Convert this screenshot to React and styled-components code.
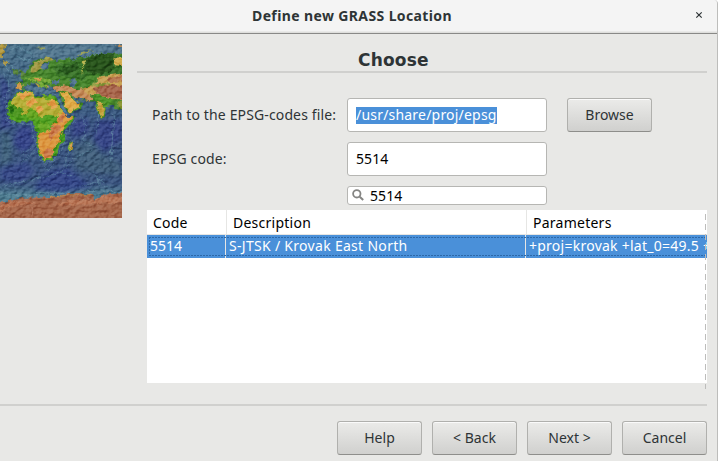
import React from 'react';
import styled, { createGlobalStyle } from 'styled-components';

const GlobalStyle = createGlobalStyle`
  * { box-sizing: border-box; }
  body { margin: 0; background: #fff; overflow: hidden; }
`;

const Dialog = styled.div`
  width: 718px;
  height: 461px;
  display: flex;
  flex-direction: column;
  overflow: hidden;
  background: #e8e8e6;
  border-right: 1px solid #bdbdbb;
  border-top-right-radius: 4px;
  font: 14px/20px "Noto Sans", sans-serif;
  color: #2e3436;
  white-space: nowrap;
`;

const TitleBar = styled.header`
  flex: none;
  height: 34px;
  display: flex;
  align-items: center;
  padding: 0 14px 2px 252px;
  justify-content: space-between;
  background: linear-gradient(#f4f4f4 31px, #dededc 32px);
  border-bottom: 1px solid #898987;
`;

const Text = styled.span`
  display: block;
  letter-spacing: ${(p) => p.$track || 0}px;
  font-weight: ${(p) => (p.$bold ? 700 : 400)};
`;

const CloseIcon = styled.svg`
  width: 8px;
  height: 8px;
  display: block;
  position: relative;
  top: -1px;
`;

const Main = styled.main`
  flex: none;
  height: 370px;
  display: flex;
  gap: 15px;
  padding-top: 10px;
`;

const MapPicture = styled.svg`
  flex: none;
  width: 122px;
  height: 174px;
  display: block;
`;

const Relief = styled.rect`
  mix-blend-mode: soft-light;
`;

const Page = styled.section`
  width: 570px;
  display: flex;
  flex-direction: column;
`;

const Heading = styled.h1`
  margin: 0;
  padding-left: 221px;
  height: 29px;
  font: bold 17px/32px "DejaVu Sans", sans-serif;
  letter-spacing: 0.2px;
  border-bottom: 2px solid #d0d0ce;
`;

const Form = styled.div`
  display: grid;
  grid-template-columns: 195px 200px 85px;
  grid-template-rows: 34px 34px 19px;
  row-gap: 10px;
  align-items: center;
  padding: 25px 0 0 15px;
`;

const Field = styled.div`
  grid-column: 2;
  height: ${(p) => (p.$compact ? 19 : 34)}px;
  display: flex;
  align-items: center;
  gap: 6px;
  padding: 0 ${(p) => (p.$compact ? 4 : 8)}px;
  background: #fff;
  border: 1px solid #b6b6b3;
  border-radius: 3px;
  color: #000;
`;

const Selection = styled.span`
  width: 141px;
  height: 17px;
  line-height: 16px;
  overflow: hidden;
  background: #4a90d9;
  color: #fff;
  letter-spacing: 0.2px;
`;

const SearchIcon = styled.svg`
  width: 12px;
  height: 12px;
  flex: none;
  margin-top: -2px;
`;

const Button = styled.button`
  width: 85px;
  height: 34px;
  padding: 0;
  display: flex;
  align-items: center;
  justify-content: center;
  font: inherit;
  color: inherit;
  background: linear-gradient(#ebebe9, #d0d0ce);
  border: 1px solid #b0b0ad;
  border-bottom-color: #8e8e8b;
  border-radius: 3px;
  box-shadow: inset 0 1px #fafafa;
  margin-left: ${(p) => p.$indent || 0}px;
`;

const Table = styled.div`
  position: relative;
  width: 560px;
  height: 173px;
  margin: 5px 0 0 10px;
  background: #fff;
  color: #000;
`;

const TableRow = styled.div`
  display: grid;
  grid-template-columns: ${(p) => (p.$selected ? '79px 300px 181px' : '80px 300px 180px')};
  height: ${(p) => (p.$selected ? 23 : 25)}px;
  position: relative;
  background: ${(p) => (p.$selected ? '#4a90d9' : '#fff')};
  color: ${(p) => (p.$selected ? '#fff' : '#000')};
  ${(p) => !p.$selected && 'border-bottom: 1px solid #e6e6e4;'}
`;

const Cell = styled.div`
  padding: ${(p) => (p.$head ? '2px 0 0 6px' : '0 0 2px 3px')};
  overflow: hidden;
  display: flex;
  align-items: center;
  border-right: ${(p) => (p.$last ? 0 : 1)}px solid #e6e6e4;
`;

const FocusLine = styled.div`
  position: absolute;
  inset: 2px 0 2px 2px;
  background:
    repeating-linear-gradient(90deg, #2c68a8 0 2px, transparent 2px 3px) top / 100% 1px no-repeat,
    repeating-linear-gradient(90deg, #2c68a8 0 2px, transparent 2px 3px) bottom / 100% 1px no-repeat,
    repeating-linear-gradient(#2c68a8 0 2px, transparent 2px 3px) left / 1px 100% no-repeat;
`;

const TableEdge = styled.div`
  position: absolute;
  right: 1px;
  top: 4px;
  width: 1px;
  height: 175px;
  background: repeating-linear-gradient(#bdbdbb 0 6px, transparent 6px 10px);
`;

const Footer = styled.footer`
  display: flex;
  justify-content: flex-end;
  gap: 10px;
  width: 707px;
  border-top: 2px solid #d0d0ce;
  padding-top: 15px;
`;

function WorldMap() {
  return (
    <MapPicture viewBox="0 42 366 522" preserveAspectRatio="none">
      <defs>
        <linearGradient id="ocean" x1="0" y1="0" x2="0" y2="1">
          <stop offset="0" stopColor="#4b7189" />
          <stop offset=".3" stopColor="#3d5f82" />
          <stop offset=".5" stopColor="#3a5580" />
          <stop offset=".8" stopColor="#3a547f" />
          <stop offset=".87" stopColor="#4d7b8f" />
        </linearGradient>
        <filter id="rough" x="-5%" y="-5%" width="110%" height="110%" colorInterpolationFilters="sRGB">
          <feTurbulence type="fractalNoise" baseFrequency=".08" numOctaves="3" seed="8" result="n" />
          <feDisplacementMap in="SourceGraphic" in2="n" scale="16" xChannelSelector="R" yChannelSelector="G" />
        </filter>
        <filter id="soft" x="-20%" y="-20%" width="140%" height="140%">
          <feGaussianBlur stdDeviation="8" />
        </filter>
        <filter id="relief" x="0" y="0" width="100%" height="100%" colorInterpolationFilters="sRGB">
          <feTurbulence type="fractalNoise" baseFrequency=".06 .09" numOctaves="5" seed="21" result="h" />
          <feColorMatrix in="h" values="0 0 0 0 0  0 0 0 0 0  0 0 0 0 0  1 0 0 0 0" result="a" />
          <feDiffuseLighting in="a" surfaceScale="9" lightingColor="#b4b4b4">
            <feDistantLight azimuth="225" elevation="50" />
          </feDiffuseLighting>
        </filter>
        <clipPath id="frame"><rect y="42" width="366" height="522" /></clipPath>
      </defs>
      <g clipPath="url(#frame)">
        <rect y="42" width="366" height="522" fill="url(#ocean)" />
        <g filter="url(#soft)" opacity=".75">
          <path d="M0 130L30 170 20 240 45 285 0 300Z" fill="#363f88" />
          <path d="M60 285L100 290 105 345 70 370 35 340Z" fill="#34408c" />
          <path d="M215 270L265 265 265 310 215 325Z" fill="#353f88" />
          <path d="M290 270L366 270 366 330 310 365 280 330Z" fill="#363f88" />
          <path d="M130 430L200 410 275 470 190 490 100 480Z" fill="#32438a" />
          <path d="M0 415L80 395 105 425 60 460 0 450Z" fill="#364489" />
          <path d="M10 300L38 330 35 390 0 410V310Z" fill="#43667c" />
          <path d="M215 350L270 325 300 370 366 400V440L290 430 230 420Z" fill="#42627a" />
          <path d="M90 55L230 45 366 50 340 75 220 90 165 90 100 82Z" fill="#567a92" />
        </g>
        <g fill="none" stroke="#6392a6" strokeWidth="2.5" filter="url(#rough)" opacity=".6">
          <path d="M10 130L25 150 27 175 15 205 18 250 25 275 60 284 95 282 101 325 114 365 122 392 142 400 173 381 193 342 199 306 225 271" />
          <path d="M18 90L40 115 55 125 M30 62L55 50 90 70 M50 80L85 92 100 80 M15 105L35 135" strokeWidth="4" />
          <path d="M245 260Q270 290 248 330L280 350 M210 325L220 345 200 380 195 410" />
          <path d="M287 225Q300 270 287 310 M342 250L333 390" strokeWidth="3" />
          <path d="M12 468Q90 450 140 440T205 405T278 360 M55 382L105 342 M65 400L102 365" />
          <path d="M130 410L150 420 165 397 M184 429L217 438 M247 470L310 450 M275 426L322 471 M291 435L300 465" />
          <path d="M0 492L85 497 120 489 240 490 280 482 366 486" strokeWidth="4" />
        </g>
        <g filter="url(#rough)">
          <path d="M80 122L105 90 150 80 168 94 205 84 230 94 265 76 325 70 376 72V235L352 240 337 224 319 228 315 254 306 271 294 248 286 215 267 214 249 211 222 202 205 184 169 181 158 169 126 173 112 159 89 161 77 178 51 178 48 158 69 158 65 141Z" fill="#47862d" />
          <path d="M88 125Q100 90 150 80L163 91 132 93 125 112 99 129Z" fill="#a29a45" />
          <path d="M160 110L243 82 325 68 376 80V132L307 139 269 133 248 151 215 145 175 139Z" fill="#397329" />
          <path d="M253 88L288 73 342 72 339 121 302 134 258 125Z" fill="#27531b" />
          <path d="M172 121L231 98 239 118 200 132Z" fill="#28591e" />
          <path d="M249 89L262 88 250 114 244 137Z" fill="#b5b34a" />
          <path d="M340 82L376 83V109L344 106Z" fill="#d4ae4e" />
          <path d="M70 148L105 140 150 147 157 158 125 154 143 174 126 171 103 153Z" fill="#74a938" />
          <path d="M104 145L122 143 122 150 106 152Z M48 163L67 162 70 174 54 180 47 173Z" fill="#d39a4c" />
          <path d="M157 170L178 164 208 169 228 179 264 177 275 186 272 215 247 208 225 203 203 183 175 184 159 180Z" fill="#c58b58" />
          <path d="M243 176L275 167 302 139 376 129V207L330 208 299 196 267 194Z" fill="#c8a052" />
          <path d="M281 174L330 163 376 170V206L330 204 293 193Z" fill="#a8664c" />
          <path d="M320 148L376 132V153L329 157Z" fill="#b67750" />
          <path d="M262 168L290 158 330 160 300 172Z" fill="#8a9a3c" />
          <path d="M276 197L300 194 320 208 336 206 335 221 318 228 314 251 307 267 296 250 288 215Z" fill="#4e9529" />
          <path d="M294 214L311 224 315 243 305 263 296 246Z" fill="#c7a33e" />
          <path d="M351 215L376 210V242L354 233Z" fill="#87932f" />
          <path d="M39 117L55 119 56 133 40 135Z M58 116L66 119 79 137 62 140Z" fill="#57833b" />
          <path d="M6 94L25 96 26 102 8 101Z M-8 44L18 43 8 79 -8 86Z" fill="#b39b43" />
          <path d="M234 75Q249 62 279 61L257 69 238 78Z M111 53L137 52 124 61Z" fill="#939b54" />
          <path d="M349 43L366 43V51L352 51Z" fill="#be8a50" />
        </g>
        <path d="M132 99L149 95 144 112 130 120 121 112ZM208 151L225 147 231 158 223 173 211 167ZM159 151L180 150 181 160 155 163ZM73 165L88 164 103 173 119 168 135 180 169 181 174 193 146 193 121 190 99 182 73 178Z" fill="#4f738f" filter="url(#rough)" />
        <path d="M104 157L119 166 116 173ZM135 164L146 168 145 175Z" fill="#bba246" />
        <g filter="url(#rough)">
          <path d="M22 235L24 218 36 203 50 190 70 181 97 182 102 195 130 203 145 195 169 198 174 214 186 240 198 261 224 260 219 273 201 292 190 308 193 334 178 350 168 375 153 391 130 395 121 379 109 343 112 314 102 294 103 278 79 272 61 278 39 276 24 260Z" fill="#50a020" />
          <path d="M35 207L65 187 95 185 106 203 151 203 170 211 186 241 185 261 145 254 123 265 105 252 83 257 61 250 48 244 32 228Z" fill="#b5ae36" />
          <path d="M49 194L79 184 99 191 69 205ZM75 220L101 202 112 218 87 229ZM140 222L160 205 173 231 157 238ZM106 235L125 224 130 240 112 249Z" fill="#e3a14b" />
          <path d="M27 218L49 231 72 236 53 265 30 257Z" fill="#49931e" />
          <path d="M28 225L43 233 36 255 26 247Z" fill="#287515" />
          <path d="M85 235L107 240 120 257 101 269 83 266Z M121 194L151 197 167 209 142 211Z" fill="#65a520" />
          <path d="M174 249L194 248 202 261 219 262 194 286 181 330 163 356 157 382 132 389 122 367 112 342 118 311 137 302 163 300 160 280 174 272Z" fill="#dc963f" />
          <path d="M178 252L193 253 191 278 176 274ZM159 287L176 278 182 306 161 317 150 334 149 309ZM130 362L156 357 158 376 135 386Z" fill="#cc7c4b" />
          <path d="M115 278L141 276 149 294 136 305 117 300Z" fill="#68aa27" />
          <path d="M182 311L193 311 190 337 173 350 166 377 159 379 160 354 177 338Z" fill="#45981f" />
          <path d="M175 184L203 180 221 202 230 214 249 215 243 235 211 251 202 242 188 220Z" fill="#4a8f25" />
          <path d="M183 189L203 184 218 209 241 219 235 232 211 247 199 232Z" fill="#dfac48" />
          <path d="M206 341L219 333 216 357 209 367 203 357Z" fill="#78ad2c" />
          <path d="M212 342L219 336 214 358 209 363Z" fill="#dc954a" />
        </g>
        <path d="M171 204L178 206 202 248 198 255 190 245Z M218 204L235 215 244 219 232 222Z" fill="#4b7893" />
        <path d="M-10 519L30 512 75 503 148 502 200 493 240 490 280 496 274 512 320 493 376 490V580H-10Z" fill="#a5664a" filter="url(#rough)" />
        <path d="M-10 532Q55 505 105 518T214 510L271 511 312 499 376 501V513L292 523 200 524 96 520 35 529 -10 546Z" fill="#b97656" filter="url(#rough)" />
        <path d="M145 503L207 495 275 495" fill="none" stroke="#b99b50" strokeWidth="2" filter="url(#rough)" />
        <path d="M96 530L98 556" stroke="#c9947c" strokeWidth="3" opacity=".6" />
        <Relief y="42" width="366" height="522" filter="url(#relief)" opacity=".6" />
      </g>
    </MapPicture>
  );
}

const footerButtons = ['Help', '< Back', 'Next >', 'Cancel'];

export default function App() {
  return (
    <>
      <GlobalStyle />
      <Dialog>
        <TitleBar>
          <Text $bold $track={0.38}>Define new GRASS Location</Text>
          <CloseIcon viewBox="0 0 8 8"><path d="M1.3 1.3l5.4 5.4M6.7 1.3L1.3 6.7" stroke="#2e3436" strokeWidth="1.2" /></CloseIcon>
        </TitleBar>
        <Main>
          <WorldMap />
          <Page>
            <Heading>Choose</Heading>
            <Form>
              <Text $track={0.13}>Path to the EPSG-codes file:</Text>
              <Field><Selection>/usr/share/proj/epsg</Selection></Field>
              <Button $indent={20}>Browse</Button>
              <Text $track={0.15}>EPSG code:</Text>
              <Field><Text $track={0.1}>5514</Text></Field>
              <Field $compact>
                <SearchIcon viewBox="0 0 12 12" fill="none" stroke="#858583">
                  <circle cx="4.8" cy="4.8" r="3.7" strokeWidth="1.8" />
                  <path d="M7.7 7.7l3.5 3.3" strokeWidth="2" />
                </SearchIcon>
                <Text $track={0.1}>5514</Text>
              </Field>
            </Form>
            <Table>
              <TableRow>
                <Cell $head><Text $track={0.2}>Code</Text></Cell>
                <Cell $head><Text $track={0.25}>Description</Text></Cell>
                <Cell $head $last><Text $track={0.25}>Parameters</Text></Cell>
              </TableRow>
              <TableRow $selected>
                <Cell><Text>5514</Text></Cell>
                <Cell><Text $track={0.3}>S-JTSK / Krovak East North</Text></Cell>
                <Cell $last><Text $track={0.25}>+proj=krovak +lat_0=49.5 +</Text></Cell>
                <FocusLine />
              </TableRow>
              <TableEdge />
            </Table>
          </Page>
        </Main>
        <Footer>
          {footerButtons.map((label) => (
            <Button key={label}>{label}</Button>
          ))}
        </Footer>
      </Dialog>
    </>
  );
}
